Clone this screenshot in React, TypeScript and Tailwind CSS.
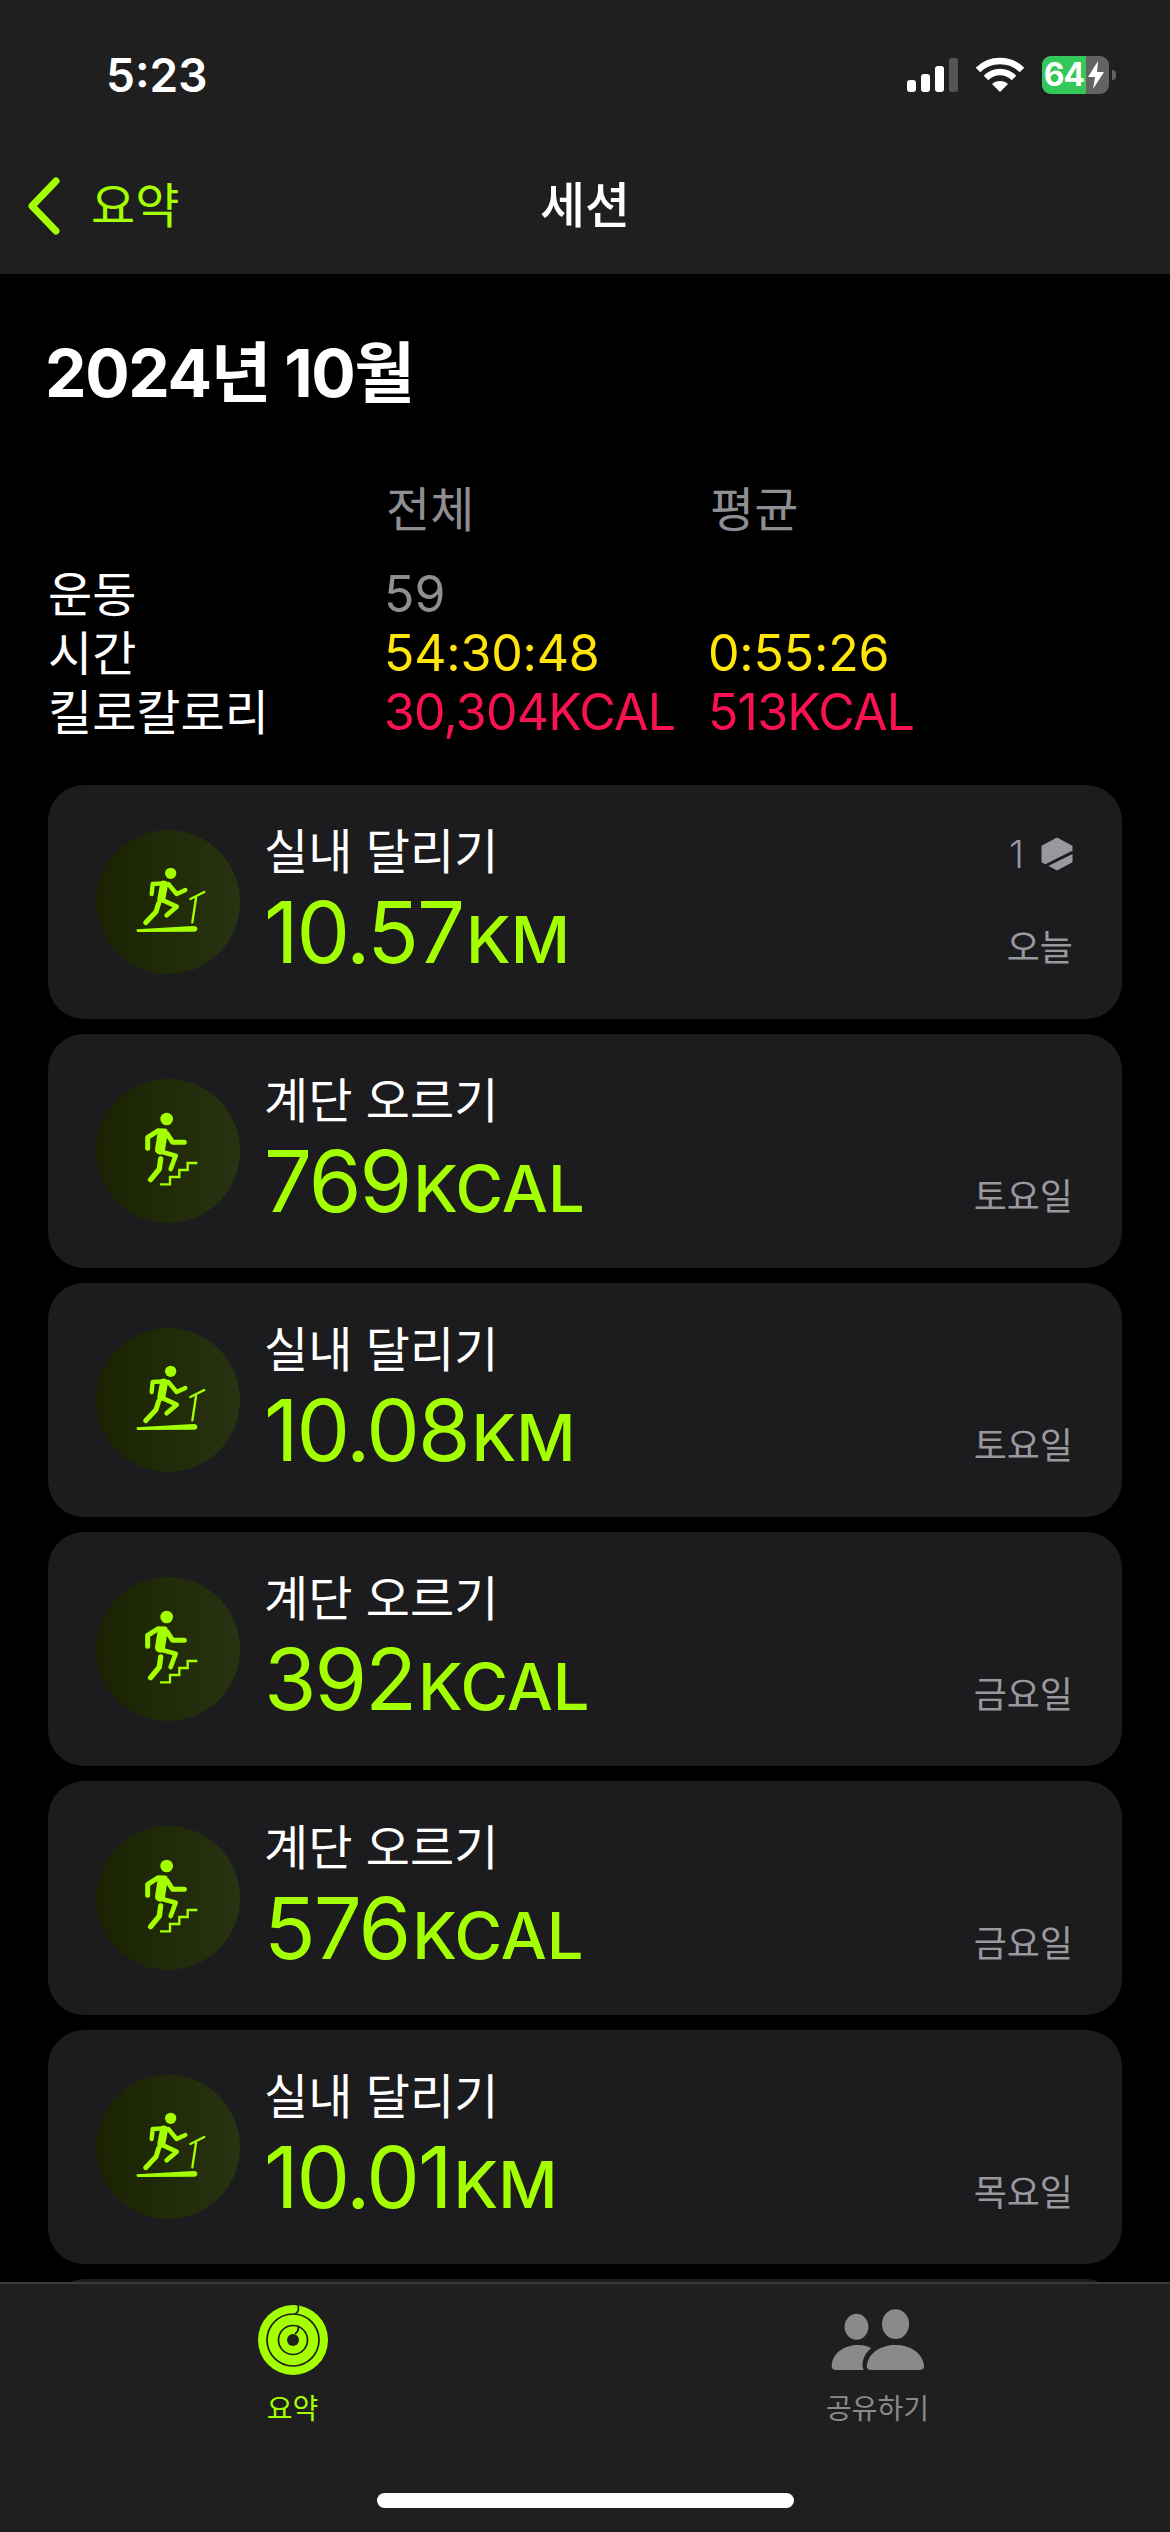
import React from 'react';

type Kind = 'run' | 'stairs';

const sessions: { kind: Kind; value: string; unit: string; day: string; badge?: boolean }[] = [
  { kind: 'run', value: '10.57', unit: 'KM', day: '오늘', badge: true },
  { kind: 'stairs', value: '769', unit: 'KCAL', day: '토요일' },
  { kind: 'run', value: '10.08', unit: 'KM', day: '토요일' },
  { kind: 'stairs', value: '392', unit: 'KCAL', day: '금요일' },
  { kind: 'stairs', value: '576', unit: 'KCAL', day: '금요일' },
  { kind: 'run', value: '10.01', unit: 'KM', day: '목요일' },
];

function RunIcon() {
  return (
    <svg viewBox="48 60 432 432" className="h-full w-full" fill="none" stroke="#a4ff00" strokeLinecap="round" strokeLinejoin="round">
      <circle cx="272" cy="190" r="17" fill="#a4ff00" stroke="none" />
      <path d="M215 252L218 222L250 220" strokeWidth="13" />
      <path d="M265 222L290 252L316 240" strokeWidth="13" />
      <path d="M252 224L244 266" strokeWidth="24" />
      <path d="M243 268L290 290L260 316" strokeWidth="14" />
      <path d="M236 280L228 305L197 338" strokeWidth="15" />
      <path d="M170 358L340 348Q352 348 352 356Q352 365 342 365L172 366Q168 362 170 358Z" fill="#a4ff00" stroke="none" />
      <path d="M337 337L348 264" strokeWidth="7" />
      <path d="M331 267L373 246" strokeWidth="7" />
    </svg>
  );
}

function StairsIcon() {
  return (
    <svg viewBox="48 60 432 432" className="h-full w-full" fill="none" stroke="#a4ff00" strokeLinecap="round" strokeLinejoin="round">
      <circle cx="260" cy="180" r="19" fill="#a4ff00" stroke="none" />
      <path d="M203 268L203 235L235 215L255 216" strokeWidth="15" />
      <path d="M247 228L240 272" strokeWidth="30" />
      <path d="M262 225L278 250L313 250" strokeWidth="15" />
      <path d="M236 276L287 290L272 330" strokeWidth="14" />
      <path d="M242 300L238 330L212 362" strokeWidth="16" />
      <path d="M240 376L270 376L270 354L298 354L298 333L323 333L323 312L352 312" strokeWidth="7" strokeLinecap="butt" strokeLinejoin="miter" />
    </svg>
  );
}

function SessionCard({ kind, value, unit, day, badge }: (typeof sessions)[number]) {
  return (
    <div className="flex h-[234px] shrink-0 rounded-[36px] bg-[#1c1c1e] pl-[48px] pr-[49px]">
      <div className="mt-[45px] h-[144px] w-[144px] shrink-0 rounded-full bg-linear-to-r from-[#1a2202] to-[#283312]">
        {kind === 'run' ? <RunIcon /> : <StairsIcon />}
      </div>
      <div className="ml-[24px] flex flex-col pt-[37px]">
        <div className="h-[60px] text-[48px] leading-[60px] text-white">{kind === 'run' ? '실내 달리기' : '계단 오르기'}</div>
        <div className="mt-[9px] flex items-baseline text-[#a4ff00]">
          <span className="text-[85px] leading-[84px] tracking-[-2px]">{value}</span>
          <span className="ml-[3px] text-[65px] font-medium leading-[84px]">{unit}</span>
        </div>
      </div>
      <div className="ml-auto flex flex-col items-end text-[#98989e]">
        {badge && (
          <div className="mt-[47px] flex h-[44px] items-center gap-[17px]">
            <span className="text-[38px] font-light">1</span>
            <svg viewBox="0 0 32 34" className="h-[34px] w-[32px]">
              <path d="M16 1L31 9V25L16 33L1 25V9Z" fill="#98989e" stroke="#98989e" strokeWidth="1" strokeLinejoin="round" />
              <path d="M4 29L32 15" stroke="#1c1c1e" strokeWidth="3" />
            </svg>
          </div>
        )}
        <div className={`${badge ? 'mt-[49px]' : 'mt-[140px]'} text-[36px] leading-[46px]`}>{day}</div>
      </div>
    </div>
  );
}

function StatusIcons() {
  return (
    <div className="flex items-center">
      <svg viewBox="0 0 52 34" className="h-[34px] w-[52px]">
        <rect x="0" y="22" width="9" height="12" rx="3" fill="#fff" />
        <rect x="14" y="16" width="9" height="18" rx="3" fill="#fff" />
        <rect x="28" y="8" width="9" height="26" rx="3" fill="#fff" />
        <rect x="42" y="0" width="9" height="34" rx="3" fill="#555" />
      </svg>
      <svg viewBox="0 0 50 36" className="ml-[16px] h-[36px] w-[50px]" fill="none" stroke="#fff" strokeWidth="6.5">
        <path d="M3 13C15 1 35 1 47 13" />
        <path d="M11 21C19 13 31 13 39 21" />
        <path d="M25 35L17 27C21 23 29 23 33 27Z" fill="#fff" stroke="none" />
      </svg>
      <div className="ml-[17px] flex h-[38px] w-[67px] overflow-hidden rounded-[9px] bg-[#636363]">
        <div className="flex w-[44px] items-center justify-center bg-[#34c759] text-[32px] font-bold leading-none tracking-[-1px] text-white">64</div>
        <svg viewBox="0 0 16 28" className="ml-[2px] mt-[5px] h-[28px] w-[16px]">
          <path d="M10 0L0 16H7L5 28L16 11H9Z" fill="#fff" />
        </svg>
      </div>
      <div className="ml-[3px] h-[10px] w-[4px] rounded-r-full bg-[#636363]" />
    </div>
  );
}

function RingsIcon() {
  return (
    <svg viewBox="0 0 70 70" className="h-[70px] w-[70px]" fill="none">
      <circle cx="35" cy="35" r="35" fill="#a4ff00" />
      <circle cx="35" cy="35" r="26" stroke="#1f1f1f" strokeWidth="1.7" />
      <circle cx="35" cy="35" r="14.5" stroke="#1f1f1f" strokeWidth="1.7" />
      <circle cx="35" cy="35" r="6" fill="#1f1f1f" />
      <path d="M40 0C41 4 41 7 37 9M40 21C41 25 40 27 37 29" stroke="#1f1f1f" strokeWidth="1.7" />
    </svg>
  );
}

function PeopleIcon() {
  return (
    <svg viewBox="88 84 284 186" className="h-[62px] w-[94px]" fill="#8a8a8a">
      <ellipse cx="165" cy="137" rx="36" ry="39" />
      <ellipse cx="283" cy="129" rx="41" ry="45" />
      <path d="M196 255C200 215 240 192 283 192C326 192 365 215 369 255Q369 268 355 268L210 268Q196 268 196 255Z" />
      <path d="M90 255C92 215 130 192 170 192C185 192 198 195 210 202C195 212 185 230 183 250Q183 262 187 268L103 268Q90 268 90 255Z" />
    </svg>
  );
}

export default function App() {
  return (
    <div className="flex h-[2532px] w-[1170px] flex-col overflow-hidden bg-black font-['Inter','Noto_Sans_CJK_KR',sans-serif] text-white">
      <header className="h-[274px] shrink-0 bg-[#1f1f1f]">
        <div className="flex h-[150px] items-center justify-between pl-[106px] pr-[54px]">
          <span className="text-[46px] font-semibold">5:23</span>
          <StatusIcons />
        </div>
        <div className="grid h-[112px] grid-cols-3 items-center">
          <div className="flex items-center pl-[28px] text-[#a4ff00]">
            <svg viewBox="0 0 32 58" className="h-[58px] w-[32px]" fill="none" stroke="#a4ff00" strokeWidth="7" strokeLinecap="round" strokeLinejoin="round">
              <path d="M28 4L4 29L28 54" />
            </svg>
            <span className="ml-[31px] text-[48px]">요약</span>
          </div>
          <div className="text-center text-[49px] font-medium">세션</div>
        </div>
      </header>

      <main className="min-h-0 flex-1 overflow-hidden px-[48px]">
        <h1 className="-ml-[3px] mt-[59px] text-[66px] font-bold leading-[80px] tracking-[-1.4px]">2024년 10월</h1>
        <div className="mt-[67px] grid grid-cols-[338px_324px_1fr] text-[48px] leading-[59px]">
          <div />
          <div className="text-[#8e8e93]">전체</div>
          <div className="text-[#8e8e93]">평균</div>
        </div>
        <div className="mt-[26px] grid grid-cols-[338px_324px_1fr] text-[48px] leading-[59px]">
          <div>운동</div>
          <div className="-ml-[2px] text-[50px] text-[#8e8e93]">59</div>
          <div />
          <div>시간</div>
          <div className="-ml-[2px] text-[50px] tracking-[-0.2px] text-[#ffe50b]">54:30:48</div>
          <div className="-ml-[2px] text-[50px] tracking-[-0.2px] text-[#ffe50b]">0:55:26</div>
          <div>킬로칼로리</div>
          <div className="-ml-[2px] text-[50px] tracking-[-0.8px] text-[#fa114f]">30,304KCAL</div>
          <div className="-ml-[2px] text-[50px] tracking-[-0.8px] text-[#fa114f]">513KCAL</div>
        </div>
        <div className="mt-[43px] flex flex-col gap-[15px]">
          {sessions.map((s, i) => (
            <SessionCard key={i} {...s} />
          ))}
          <div className="h-[234px] shrink-0 rounded-[36px] bg-[#1c1c1e]" />
        </div>
      </main>

      <nav className="relative h-[250px] shrink-0 border-t-2 border-[#3a3a3c] bg-[#1f1f1f]">
        <div className="grid grid-cols-2 pt-[21px]">
          <div className="flex flex-col items-center">
            <RingsIcon />
            <span className="mt-[14px] text-[28px] leading-[40px] text-[#a4ff00]">요약</span>
          </div>
          <div className="flex flex-col items-center">
            <div className="flex h-[70px] items-center">
              <PeopleIcon />
            </div>
            <span className="mt-[14px] text-[28px] leading-[40px] text-[#8a8a8a]">공유하기</span>
          </div>
        </div>
        <div className="absolute bottom-[24px] left-[377px] h-[15px] w-[417px] rounded-full bg-white" />
      </nav>
    </div>
  );
}
